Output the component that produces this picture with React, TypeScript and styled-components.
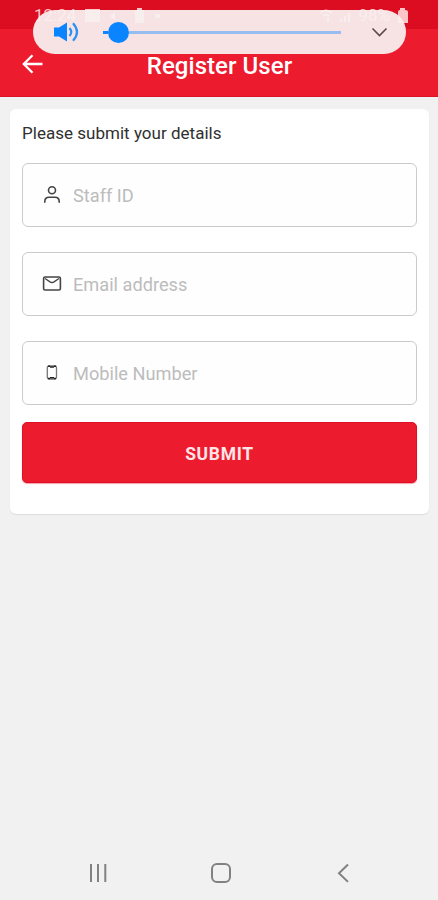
import React from "react";
import styled, { createGlobalStyle } from "styled-components";

const GlobalStyle = createGlobalStyle`
  * { box-sizing: border-box; }
  body { margin: 0; background: #f1f1f1; font-family: Roboto, sans-serif; }
`;

const Screen = styled.div`
  position: relative;
  display: flex;
  flex-direction: column;
  width: 438px;
  height: 900px;
  overflow: hidden;
  background: #f1f1f1;
`;

const StatusBar = styled.div`
  display: flex;
  align-items: flex-end;
  justify-content: space-between;
  height: 29px;
  padding: 0 30px 4px 34px;
  background: #dc0d20;
  color: #ffc4c8;
  font-size: 17px;
  line-height: 19px;
`;

const StatusGroup = styled.div<{ $gap: number }>`
  display: flex;
  align-items: center;
  gap: ${(p) => p.$gap}px;
`;

const Header = styled.header`
  display: flex;
  align-items: flex-start;
  height: 68px;
  padding: 23px 22px 0;
  background: #ed1b2e;
  border-bottom: 1px solid #d91529;
`;

const BackButton = styled.button`
  display: flex;
  width: 21px;
  height: 22px;
  padding: 0;
  margin-top: 1px;
  border: 0;
  background: none;
`;

const Title = styled.h1`
  flex: 1;
  margin: 0 20px 0 0;
  color: #fff;
  font-size: 24px;
  font-weight: 500;
  line-height: 28px;
  text-align: center;
  letter-spacing: 0.05px;
`;

const VolumePanel = styled.div`
  position: absolute;
  top: 10px;
  left: 33px;
  display: flex;
  align-items: center;
  width: 373px;
  height: 44px;
  padding: 0 18px 0 20px;
  border-radius: 22px;
  background: rgba(249, 240, 240, 0.94);
`;

const Slider = styled.div`
  display: flex;
  align-items: center;
  width: 238px;
  height: 22px;
  margin-left: 24px;
`;

const Track = styled.div<{ $width: number; $color: string }>`
  width: ${(p) => p.$width}px;
  height: 3px;
  background: ${(p) => p.$color};
`;

const Thumb = styled.div`
  width: 21px;
  height: 21px;
  border-radius: 50%;
  background: #0a84ff;
`;

const Chevron = styled.svg`
  margin-left: auto;
`;

const Card = styled.form`
  display: flex;
  flex-direction: column;
  height: 405px;
  margin: 12px 9px 0 10px;
  padding: 14px 12px 0;
  border-radius: 6px;
  background: #fff;
  box-shadow: 0 1px 1px #dcdcdc;
`;

const Prompt = styled.p`
  margin: 0 0 20px;
  color: #303030;
  font-size: 17px;
  line-height: 20px;
  letter-spacing: 0.02px;
`;

const Field = styled.label`
  display: flex;
  align-items: center;
  height: 64px;
  margin-bottom: 25px;
  padding: 0 20px;
  border: 1.5px solid #cbcbcb;
  border-radius: 6px;
  background: #fefefe;
`;

const FieldIcon = styled.svg`
  flex: none;
  width: 20px;
  height: 20px;
  margin: -3px 11px 0 -1px;
  overflow: visible;
  fill: none;
  stroke: #444;
  stroke-width: 1.6;
`;

const Input = styled.input`
  flex: 1;
  min-width: 0;
  height: 30px;
  padding: 0;
  border: 0;
  outline: 0;
  background: none;
  font: 400 18.2px Roboto, sans-serif;
  &::placeholder { color: #bcbcbc; opacity: 1; }
`;

const Submit = styled.button`
  height: 61px;
  margin-top: -8px;
  padding: 2px 0 0;
  border: 1px solid #dd1026;
  border-radius: 5px;
  background: #ed1b2e;
  box-shadow: 0 1px 1px #f5a0a7;
  color: #ffe5e7;
  font: 700 17.5px Roboto, sans-serif;
  letter-spacing: 0.7px;
`;

const NavBar = styled.nav`
  display: flex;
  justify-content: space-between;
  align-items: center;
  height: 55px;
  margin-top: auto;
  padding: 0 83px 0 86px;
`;

const NavIcon = styled.svg`
  width: 24px;
  height: 24px;
  fill: none;
  stroke: #818181;
  stroke-width: 2;
`;

export default function App() {
  return (
    <>
      <GlobalStyle />
      <Screen>
        <StatusBar>
          <StatusGroup $gap={9}>
            <span>12:24</span>
            <svg width="76" height="16" viewBox="0 0 76 16" fill="currentColor">
              <path d="M0 1h15v13H0zM25 8l5-4v8zM50 2h2V0h5v2h2v13h-9zM70 6h5v4h-5z" />
            </svg>
          </StatusGroup>
          <StatusGroup $gap={7}>
            <svg width="32" height="16" viewBox="0 0 32 16" fill="none" stroke="currentColor" strokeWidth="2">
              <path d="M1 5q6-5 12 0M4 8q3-3 6 0M9 9v5M22 14v-3M26 14V8M30 14V5" />
            </svg>
            <span>98%</span>
            <svg width="11" height="16" viewBox="0 0 11 16" fill="currentColor">
              <path d="M1 4q0-2 2-2V0h5v2q3 0 3 2v11H1z" />
            </svg>
          </StatusGroup>
        </StatusBar>
        <Header>
          <BackButton type="button" aria-label="Back">
            <svg width="21" height="22" viewBox="0 0 21 22" fill="none" stroke="#fff" strokeWidth="2.3">
              <path d="M20.5 11H2M10.5 2.3 1.8 11l8.7 8.7" />
            </svg>
          </BackButton>
          <Title>Register User</Title>
        </Header>
        <VolumePanel>
          <svg width="26" height="22" viewBox="0 0 26 22">
            <path d="M1 6.5h5L14 1.5v19l-8-5H1z" fill="#0a84ff" />
            <path d="M16.5 7q3.5 4 0 8M20 2.2q8 8.8 0 17.6" fill="none" stroke="#2c91f6" strokeWidth="2.2" />
          </svg>
          <Slider>
            <Track $width={5} $color="#0a84ff" />
            <Thumb />
            <Track $width={212} $color="#96bcf0" />
          </Slider>
          <Chevron width="17" height="10" viewBox="0 0 17 10" fill="none" stroke="#59494b" strokeWidth="1.6">
            <path d="m1.5 1.5 7 7 7-7" />
          </Chevron>
        </VolumePanel>
        <Card>
          <Prompt>Please submit your details</Prompt>
          <Field>
            <FieldIcon viewBox="0 0 20 20">
              <circle cx="10" cy="6.2" r="3.5" />
              <path d="M2.8 18.8v-1.2q0-4.3 4.2-4.3h6q4.2 0 4.2 4.3v1.2" />
            </FieldIcon>
            <Input placeholder="Staff ID" />
          </Field>
          <Field>
            <FieldIcon viewBox="0 0 20 20">
              <rect x="1.6" y="4" width="16.8" height="13" rx="1.5" />
              <path d="m3 5.5 5 3.4q2 1.2 4 0l5-3.4" strokeWidth="1.3" />
            </FieldIcon>
            <Input placeholder="Email address" />
          </Field>
          <Field>
            <FieldIcon viewBox="0 0 20 20">
              <rect x="5.3" y="3.8" width="9.2" height="13.2" rx="1.8" stroke="#777" strokeWidth="1.3" />
              <path d="M6 4.3h2M12 4.3h2M8 5h4M6 16.5h2M12 16.5h2M8 15.8h4" stroke="#222" strokeWidth="1.6" />
            </FieldIcon>
            <Input placeholder="Mobile Number" />
          </Field>
          <Submit type="button">SUBMIT</Submit>
        </Card>
        <NavBar>
          <NavIcon viewBox="0 0 24 24">
            <path d="M5 3v18M12 3v18M19.3 3v18" />
          </NavIcon>
          <NavIcon viewBox="0 0 24 24">
            <rect x="3" y="3" width="18" height="18" rx="5" />
          </NavIcon>
          <NavIcon viewBox="0 0 24 24">
            <path d="m17 3.5-9 8.7 9 8.7" />
          </NavIcon>
        </NavBar>
      </Screen>
    </>
  );
}
